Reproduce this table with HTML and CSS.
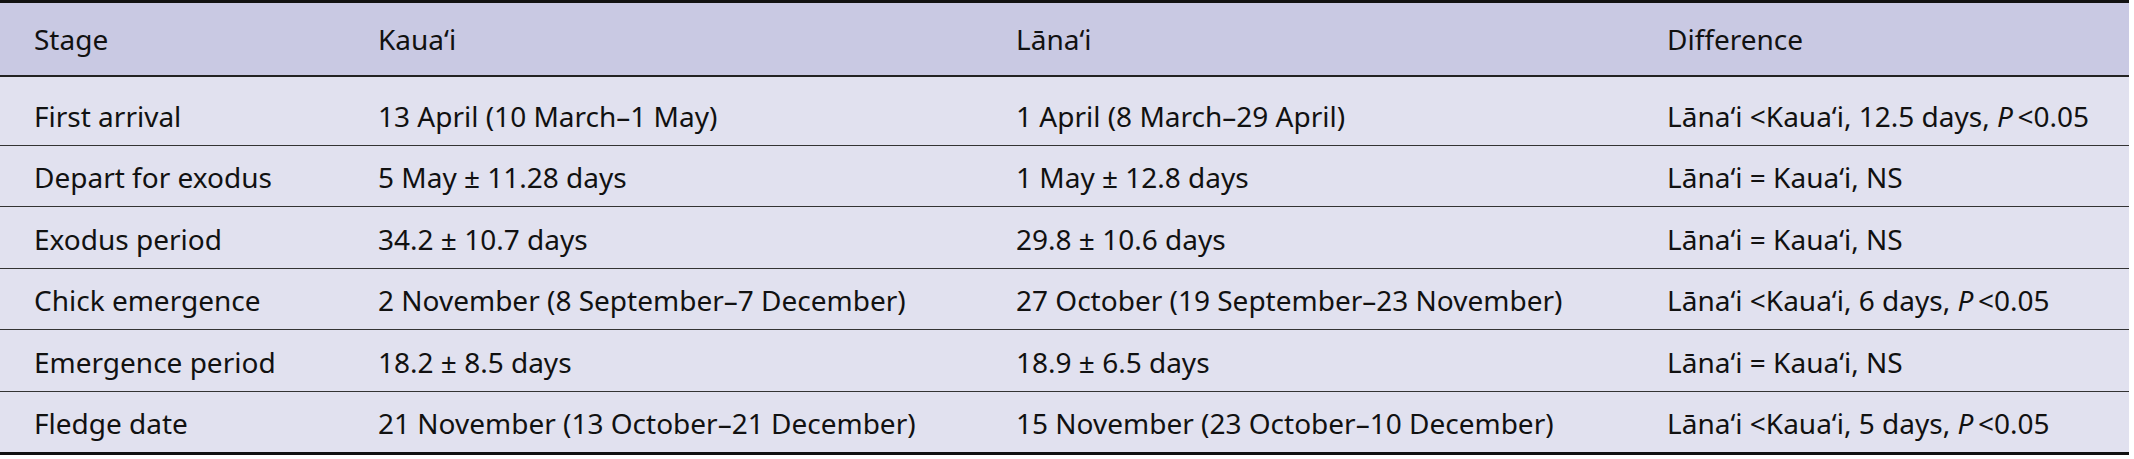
FILE: index.html
```html
<!DOCTYPE html>
<html lang="en">
<head>
<meta charset="utf-8">
<title>Stage timing</title>
<link rel="stylesheet" href="styles.css">
</head>
<body>
<table class="data">
  <colgroup>
    <col class="c1"><col class="c2"><col class="c3"><col class="c4">
  </colgroup>
  <thead>
    <tr><th>Stage</th><th>Kaua‘i</th><th>Lāna‘i</th><th>Difference</th></tr>
  </thead>
  <tbody>
    <tr class="first"><td>First arrival</td><td>13 April (10 March–1 May)</td><td>1 April (8 March–29 April)</td><td>Lāna‘i &lt;Kaua‘i, 12.5 days, <i>P</i>&#8201;&lt;0.05</td></tr>
    <tr><td>Depart for exodus</td><td>5 May ± 11.28 days</td><td>1 May ± 12.8 days</td><td>Lāna‘i = Kaua‘i, NS</td></tr>
    <tr><td>Exodus period</td><td>34.2 ± 10.7 days</td><td>29.8 ± 10.6 days</td><td>Lāna‘i = Kaua‘i, NS</td></tr>
    <tr><td>Chick emergence</td><td>2 November (8 September–7 December)</td><td>27 October (19 September–23 November)</td><td>Lāna‘i &lt;Kaua‘i, 6 days, <i>P</i>&#8201;&lt;0.05</td></tr>
    <tr><td>Emergence period</td><td>18.2 ± 8.5 days</td><td>18.9 ± 6.5 days</td><td>Lāna‘i = Kaua‘i, NS</td></tr>
    <tr><td>Fledge date</td><td>21 November (13 October–21 December)</td><td>15 November (23 October–10 December)</td><td>Lāna‘i &lt;Kaua‘i, 5 days, <i>P</i>&#8201;&lt;0.05</td></tr>
  </tbody>
</table>
</body>
</html>
```
FILE: styles.css
```css
html, body {
  margin: 0;
  padding: 0;
  background: #ffffff;
}
.data {
  width: 2129px;
  border-collapse: collapse;
  table-layout: fixed;
  font-family: "Noto Sans", "Liberation Sans", sans-serif;
  font-size: 28px;
  line-height: 1.2;
  color: #111111;
  border-top: 3px solid #111111;
  border-bottom: 3px solid #111111;
}
.c1 { width: 344px; }
.c2 { width: 638px; }
.c3 { width: 651px; }
.c4 { width: 496px; }
.data th,
.data td {
  text-align: left;
  font-weight: normal;
  padding: 0 0 0 34px;
  white-space: nowrap;
  vertical-align: middle;
}
.data thead th {
  background: #c9c9e3;
  height: 71px;
  padding-top: 1px;
  border-bottom: 2px solid #222222;
}
.data tbody td {
  background: #e1e1ef;
  height: 56.4px;
  padding-top: 4px;
  border-bottom: 1px solid #333333;
}
.data tbody tr.first td {
  height: 57px;
  padding-top: 11px;
}
.data tbody tr:last-child td {
  border-bottom: none;
}
.data i {
  font-style: italic;
}
```
